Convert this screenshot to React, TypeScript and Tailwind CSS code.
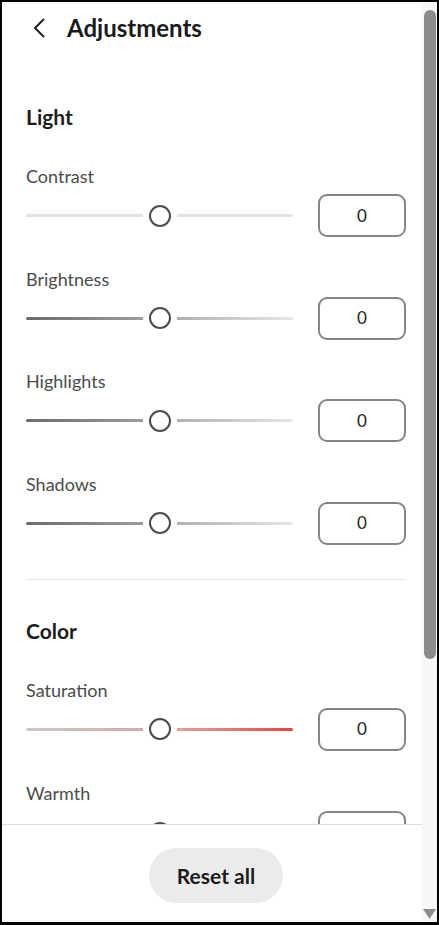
import React from "react";

type Track = "plain" | "tone" | "sat";

const trackClass: Record<Track, string> = {
  plain: "bg-[#e2e2e2]",
  tone: "bg-[linear-gradient(to_right,#6b6b6b_0%,#9c9c9c_44%,#b0b0b0_56%,#e6e6e6_100%)]",
  sat: "bg-[linear-gradient(to_right,#c9c9c9_0%,#d4aaa7_44%,#e3a49e_56%,#e4463b_100%)]",
};

const Control = ({ label, track }: { label: string; track: Track }) => (
  <div className="flex flex-col">
    <div className="text-[18px] leading-[24px] text-[#4b4b4b]">{label}</div>
    <div className="mt-[6px] flex items-center justify-between">
      <div className="relative flex h-[22px] w-[267px] items-center">
        <div className={`h-[3px] w-full rounded-full ${trackClass[track]}`} />
        <div className="absolute left-[123px] top-0 h-[22px] w-[22px] rounded-full border-2 border-[#4b4b4b] bg-white ring-[6px] ring-white" />
      </div>
      <div className="flex h-[43px] w-[88px] items-center justify-center rounded-[9px] border-2 border-[#858585] text-[17px] text-[#222]">
        0
      </div>
    </div>
  </div>
);

const Heading = ({ children }: { children: React.ReactNode }) => (
  <div className="text-[21px] font-bold leading-[28px] text-[#1c1c1c]">{children}</div>
);

export default function App() {
  return (
    <div className="flex h-[925px] w-[439px] border-x-2 border-t-2 border-b-[3px] border-black bg-white font-['Lato','Noto_Sans',sans-serif]">
      <div className="flex min-w-0 flex-1 flex-col">
        <div className="flex-1 overflow-hidden">
          <div className="mt-[10px] flex h-[32px] items-center pl-[31px]">
            <svg width="12" height="20" viewBox="0 0 12 20" className="shrink-0">
              <polyline
                points="10.5,1.5 2,10 10.5,18.5"
                fill="none"
                stroke="#222"
                strokeWidth="2"
                strokeLinecap="round"
                strokeLinejoin="round"
              />
            </svg>
            <div className="ml-[22px] text-[24px] font-bold leading-[32px] text-[#1a1a1a]">
              Adjustments
            </div>
          </div>

          <div className="pl-[24px] pr-[16px]">
            <div className="mt-[59px]">
              <Heading>Light</Heading>
            </div>
            <div className="mt-[33px] flex flex-col gap-[29.5px]">
              <Control label="Contrast" track="plain" />
              <Control label="Brightness" track="tone" />
              <Control label="Highlights" track="tone" />
              <Control label="Shadows" track="tone" />
            </div>

            <div className="mt-[34px] h-px bg-[#e6e6e6]" />

            <div className="mt-[37px]">
              <Heading>Color</Heading>
            </div>
            <div className="mt-[33px] flex flex-col gap-[30.5px]">
              <Control label="Saturation" track="sat" />
              <Control label="Warmth" track="plain" />
            </div>
          </div>
        </div>

        <div className="flex h-[98px] shrink-0 justify-center border-t border-[#dedede] pl-[8px] pt-[23px]">
          <button className="h-[55px] w-[134px] rounded-full bg-[#ebebeb] text-[21px] font-bold text-[#1c1c1c]">
            Reset all
          </button>
        </div>
      </div>

      <div className="flex w-[15px] shrink-0 flex-col items-center bg-[#f7f7f7]">
        <div className="mt-[8px] h-[649px] w-[12px] rounded-full bg-[#8c8c8c]" />
        <div className="flex-1" />
        <svg width="13" height="10" viewBox="0 0 13 10" className="mb-[3px]">
          <polygon points="0,0 13,0 6.5,10" fill="#8c8c8c" />
        </svg>
      </div>
    </div>
  );
}
